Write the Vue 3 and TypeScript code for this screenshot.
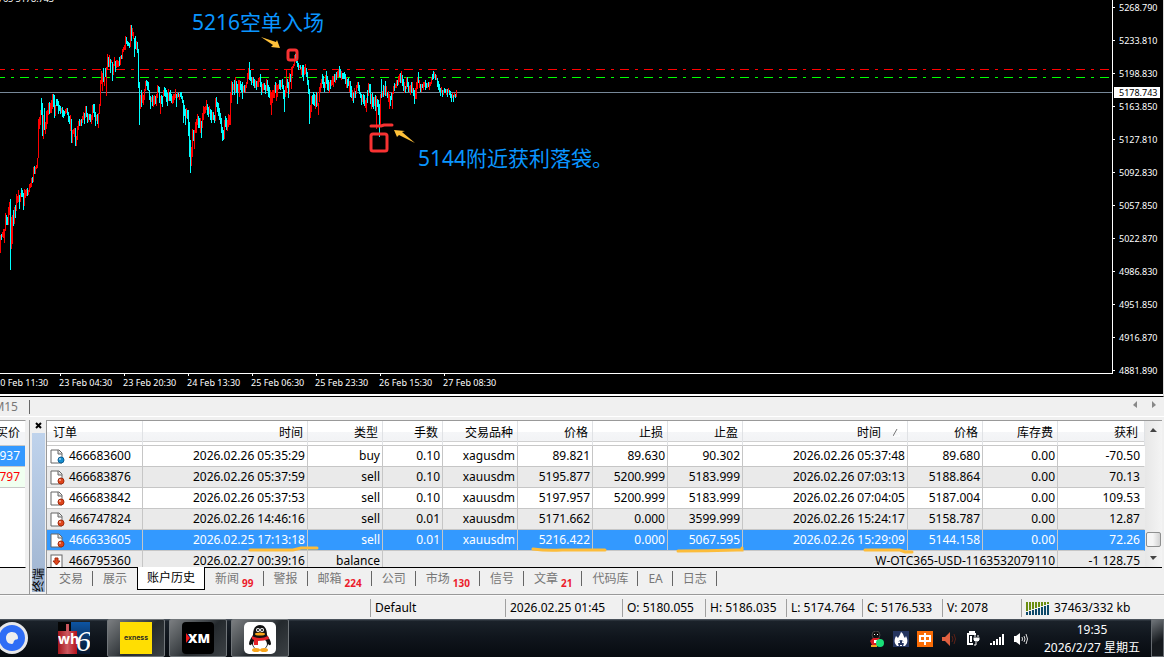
<script setup lang="ts">
interface Candle { x: number; top: number; height: number; up: boolean }
interface Order {
  id: string; kind: 'buy' | 'sell' | 'balance'; opened: string; type: string; cells: string[]; closed: string; exit: string; swap: string; profit: string
}

// One entry per bar: r = rising, c = falling, followed by the pixel span high-low.
const series = `r235-253 c234-240 r232-237 r229-238 r229-243 r213-231 c215-225 c217-225 r207-225 r202-215
c199-270 r217-249 r215-244 c210-226 r207-224 c205-218 r194-211 r196-203 r190-202 c195-209
r193-202 c188-197 c190-197 c193-210 r189-206 r190-198 r189-196 c188-196 r190-195 r184-192
r183-188 r178-187 c177-183 r167-182 c166-174 r167-174 r165-169 r158-168 r119-158 r117-129
r110-125 c98-115 c103-136 r115-139 c108-130 r122-134 r111-129 r110-124 r103-115 c102-114
r103-113 r100-113 r94-109 c94-107 c95-118 r105-116 c99-106 c99-106 c101-114 c105-111
c106-114 r108-113 c107-117 c110-118 c111-116 r109-114 r108-113 c108-115 c112-122 c116-124
r115-131 c119-143 r130-143 r129-134 r128-137 c128-146 r136-146 r126-140 r121-130 c119-126
r120-126 c119-126 r116-123 r112-120 c113-124 r106-118 c106-117 c113-123 r114-122 c114-120
c114-122 r115-124 r105-120 c104-113 c104-117 c112-126 r115-121 c114-124 r113-128 r104-114
r80-106 r71-84 r73-91 c68-82 r77-86 c68-77 r67-96 r54-70 c57-67 r55-67
c59-73 r60-63 c62-81 r64-75 r57-66 c61-72 r60-68 r60-67 r61-67 c57-66
r56-65 c55-59 r49-59 r47-52 r45-50 r36-50 c37-44 c41-46 c42-46 c43-48
r25-47 c25-41 r28-36 r32-39 c38-57 c36-49 r41-50 c42-53 c49-88 c82-125
r95-109 c90-107 r92-103 r95-105 r89-100 r81-91 c80-86 c81-90 c82-91 c90-100
c96-109 r97-102 c95-106 r96-107 r95-105 c96-104 r94-106 r85-98 c86-92 c87-103
r96-114 c95-104 c96-107 r90-97 c87-96 c88-97 c90-102 c93-106 r89-101 c92-101
c90-101 c94-103 r96-104 r94-103 r94-100 r89-98 c94-107 r93-98 c93-97 r94-100
c92-97 c92-99 c96-103 c100-123 c105-116 c109-125 r108-118 c110-119 c110-136 c122-157
c140-173 r147-166 r129-157 c130-141 r130-149 r122-133 r119-133 r114-125 c116-128 c118-128
r118-133 c121-138 r113-128 r106-120 r107-114 r106-113 r100-110 c104-115 c107-117 r106-114
c109-120 c110-123 r112-120 c112-120 c115-123 r98-121 c97-107 c102-112 c103-116 c108-120
c113-124 c118-133 c127-141 c130-140 r120-139 c116-127 c118-130 r120-131 r114-127 r115-125
r93-125 r81-103 c82-95 r84-90 c80-95 r77-92 c81-93 c84-104 r80-92 r80-97
c81-90 c84-92 c82-99 r86-93 c85-92 r85-92 r82-88 r73-84 r68-79 c62-80
c70-81 c77-85 r77-83 c77-86 c79-88 r80-88 c81-90 r81-87 r78-87 r77-82
c74-87 c82-95 r84-92 r83-90 c83-90 c85-94 r79-91 c80-91 c85-97 c87-98
r90-105 r92-115 r90-103 r90-98 r85-98 c82-93 r83-101 r85-97 r84-90 c80-89
c80-90 r80-87 c79-89 c85-99 c90-112 r86-97 r70-93 c79-88 c82-98 r73-94
c74-82 r67-89 r66-76 r64-68 r55-66 c54-61 c58-63 c61-67 c63-70 r65-68
c65-69 r67-75 c65-77 c65-81 r67-75 r64-74 c68-77 c72-85 c80-94 c89-124
r105-118 r96-112 c95-104 c92-105 c94-106 r95-109 c92-107 r92-106 r103-115 r87-102
r83-92 r79-88 c74-84 c76-88 c82-92 r75-88 c71-84 c76-90 c80-91 r82-93
c80-89 r80-86 r76-85 r76-87 c74-82 r74-83 c72-80 r71-78 r69-77 c66-77
c69-78 r71-80 c73-79 c73-79 c72-79 c74-84 r77-88 c79-88 c78-86 r81-92
c81-97 c86-98 r90-101 c93-103 r88-98 c91-98 r85-94 r82-88 c82-91 c85-94
c92-98 c94-105 r95-102 c94-104 c95-106 r100-108 r98-112 c90-103 r83-96 c84-93
c84-104 r94-109 c93-107 c97-109 r97-106 c95-111 r96-129 c99-107 c100-115 c104-137
r94-125 c79-98 r91-97 c85-97 r86-95 c81-96 r86-96 c92-98 r91-102 r94-109
c96-106 c93-100 r92-109 r86-94 c83-91 r84-88 r80-88 c80-86 r76-85 r74-82
c73-83 r71-83 c75-86 c79-91 r82-93 c86-93 r77-89 c77-87 c82-92 r86-92
r85-95 c82-93 r82-92 c88-96 c90-104 r88-99 r82-99 r77-89 c72-83 r80-88
c84-92 r84-92 c84-88 r82-90 r82-87 c80-90 c83-88 r83-88 c82-87 r82-90
r82-86 r77-84 c74-80 c71-79 r72-78 c74-80 r75-80 c78-87 c81-90 c84-92
c88-96 r87-93 c90-97 r90-95 c88-93 c89-93 r89-95 c89-97 r88-93 c90-95
c91-98 c94-102 r93-98 c95-102 r93-97 c94-98 r90-97`

const candles: Candle[] = series.split(/\s+/).map((bar, x) => {
  const [high, low] = bar.slice(1).split('-').map(Number)
  return { x, top: high, height: low - high, up: bar[0] === 'r' }
})

const prices = ['5268.790', '5233.810', '5198.830', '5163.850', '5127.810', '5092.830', '5057.850', '5022.870', '4986.830', '4951.850', '4916.870', '4881.890']
const dates = ['20 Feb 11:30', '23 Feb 04:30', '23 Feb 20:30', '24 Feb 13:30', '25 Feb 06:30', '25 Feb 23:30', '26 Feb 15:30', '27 Feb 08:30']
const headers = ['订单', '时间', '类型', '手数', '交易品种', '价格', '止损', '止盈', '时间', '价格', '库存费', '获利']

const orders: Order[] = [
  { id: '466683600', kind: 'buy', opened: '2026.02.26 05:35:29', type: 'buy', cells: ['0.10', 'xagusdm', '89.821', '89.630', '90.302'], closed: '2026.02.26 05:37:48', exit: '89.680', swap: '0.00', profit: '-70.50' },
  { id: '466683876', kind: 'sell', opened: '2026.02.26 05:37:59', type: 'sell', cells: ['0.10', 'xauusdm', '5195.877', '5200.999', '5183.999'], closed: '2026.02.26 07:03:13', exit: '5188.864', swap: '0.00', profit: '70.13' },
  { id: '466683842', kind: 'sell', opened: '2026.02.26 05:37:53', type: 'sell', cells: ['0.10', 'xauusdm', '5197.957', '5200.999', '5183.999'], closed: '2026.02.26 07:04:05', exit: '5187.004', swap: '0.00', profit: '109.53' },
  { id: '466747824', kind: 'sell', opened: '2026.02.26 14:46:16', type: 'sell', cells: ['0.01', 'xauusdm', '5171.662', '0.000', '3599.999'], closed: '2026.02.26 15:24:17', exit: '5158.787', swap: '0.00', profit: '12.87' },
  { id: '466633605', kind: 'sell', opened: '2026.02.25 17:13:18', type: 'sell', cells: ['0.01', 'xauusdm', '5216.422', '0.000', '5067.595'], closed: '2026.02.26 15:29:09', exit: '5144.158', swap: '0.00', profit: '72.26' },
]
const selected = '466633605'

const tabs = [
  { name: '交易' }, { name: '展示' }, { name: '账户历史', active: true }, { name: '新闻', count: 99 }, { name: '警报' },
  { name: '邮箱', count: 224 }, { name: '公司' }, { name: '市场', count: 130 }, { name: '信号' }, { name: '文章', count: 21 },
  { name: '代码库' }, { name: 'EA' }, { name: '日志' },
]
const traffic = Array.from({ length: 8 }, (_, i) => ({ x: i * 3, split: 10 - i }))
</script>

<template>
  <div class="desktop">
    <main class="chart">
      <div class="plot">
        <svg class="canvas" width="1112" height="373">
          <text class="ohlc" x="54" y="2" text-anchor="end">5169.765 5178.743</text>
          <g shape-rendering="crispEdges">
            <path class="stop" d="M-4 69.5H4000" />
            <path class="ask" d="M-4 77.5H4000" />
            <path class="bid" d="M0 92.5H4000" />
            <rect v-for="c in candles" :key="c.x" :x="c.x" :y="c.top" width="1" :height="c.height" :class="c.up ? 'up' : 'down'" />
          </g>
          <g class="mark">
            <rect x="288" y="50" width="9" height="10" rx="2" />
            <rect x="371" y="134" width="16" height="17" rx="2" />
            <path d="M371 126H381L384 125H392" />
          </g>
          <g class="arrow">
            <path d="M261 37L276 42L277 40L280 48L271 47L273 45Z" />
            <path d="M415 143L402 132L405 131L394 130L397 137L399 135Z" />
          </g>
          <text class="note" x="192" y="30">5216空单入场</text>
          <text class="note" x="418" y="166">5144附近获利落袋。</text>
        </svg>
      </div>
      <div class="price-axis">
        <ul><li v-for="p in prices" :key="p">{{ p }}</li></ul>
        <span class="current">5178.743</span>
      </div>
      <ul class="date-axis"><li v-for="d in dates" :key="d">{{ d }}</li></ul>
    </main>

    <nav class="chart-tabs">
      <span class="period">M15</span>
      <span class="nudge">
        <button type="button" aria-label="Previous"><svg width="5" height="8"><path d="M4 0V7L0 4Z" /></svg></button>
        <button type="button" aria-label="Next"><svg width="5" height="8"><path d="M0 0V7L4 4Z" /></svg></button>
      </span>
    </nav>

    <section class="workspace">
      <aside class="quotes">
        <div class="quote-box">
          <div class="quote head"><span>买价</span></div>
          <div class="quote picked"><span>937</span></div>
          <div class="quote falling"><span>797</span></div>
        </div>
      </aside>
      <div class="grip">
        <button type="button" aria-label="Close"><svg width="7" height="7"><path d="M1 1L6 6M6 1L1 6" /></svg></button>
        <div class="title"><span>终端</span></div>
      </div>
      <div class="terminal">
        <div class="list">
          <div class="rows">
            <table>
              <colgroup>
                <col class="w-id"><col class="w-time"><col class="w-mid"><col class="w-lot"><col class="w-mid"><col class="w-mid"><col class="w-mid"><col class="w-mid"><col class="w-time"><col class="w-mid"><col class="w-mid"><col>
              </colgroup>
              <thead>
                <tr>
                  <th v-for="(h, i) in headers" :key="i" scope="col" :class="{ sorted: i === 8 }">
                    {{ h }}<svg v-if="i === 8" width="8" height="8"><path class="lit" d="M3 1L7 7H0" /><path d="M0 7L4 0" /></svg>
                  </th>
                </tr>
              </thead>
              <tbody>
                <tr v-for="o in orders" :key="o.id" :class="{ selected: o.id === selected }">
                  <td>
                    <svg class="doc" width="15" height="15" viewBox="0 0 15 15">
                      <path d="M1 1H9L12 4V14H1Z" fill="#fff" stroke="#666" /><path d="M8 1V5H12" fill="#ddd" stroke="#666" />
                      <circle cx="11" cy="11" r="3" :fill="o.kind === 'buy' ? '#168fd0' : '#e0451b'" :stroke="o.kind === 'buy' ? '#0b5f96' : '#a42a0c'" />
                      <circle cx="10" cy="10" r="1" fill="#fff" opacity=".6" />
                    </svg>{{ o.id }}
                  </td>
                  <td>{{ o.opened }}</td><td>{{ o.type }}</td>
                  <td v-for="(v, i) in o.cells" :key="i">{{ v }}</td>
                  <td>{{ o.closed }}</td><td>{{ o.exit }}</td><td>{{ o.swap }}</td><td class="profit">{{ o.profit }}</td>
                </tr>
                <tr>
                  <td>
                    <svg class="doc" width="15" height="15" viewBox="0 0 15 15">
                      <rect x="1" y="1" width="11" height="13" fill="#fff" stroke="#666" />
                      <path d="M5 4H8V7H10L6.500 11L3 7H5Z" fill="#e0451b" stroke="#a42a0c" />
                    </svg>466795360
                  </td>
                  <td>2026.02.27 00:39:16</td><td>balance</td>
                  <td colspan="8">W-OTC365-USD-1163532079110</td><td class="profit">-1 128.75</td>
                </tr>
              </tbody>
            </table>
            <svg class="underlines" width="1098" height="146">
              <path d="M203 129H246L254 127H270M486 128Q500 130 515 129H558M631 130Q660 130 690 129H695V127M818 129H853L858 131H865" />
            </svg>
          </div>
          <div class="scroll">
            <svg width="7" height="5"><path d="M0 4L3 0L7 4Z" /></svg>
            <span class="thumb"></span>
            <svg width="7" height="5"><path d="M0 0L3 4L7 0Z" /></svg>
          </div>
        </div>
        <nav class="tabs">
          <button v-for="t in tabs" :key="t.name" type="button" :class="{ active: t.active }">
            {{ t.name }}<b v-if="t.count">{{ t.count }}</b>
          </button>
        </nav>
      </div>
    </section>

    <footer class="status">
      <span class="fill"></span>
      <span class="s-profile">Default</span>
      <span class="s-time">2026.02.25 01:45</span>
      <span class="s-o">O: 5180.055</span>
      <span class="s-h">H: 5186.035</span>
      <span class="s-l">L: 5174.764</span>
      <span class="s-c">C: 5176.533</span>
      <span class="s-v">V: 2078</span>
      <span class="s-net">
        <svg width="24" height="13" shape-rendering="crispEdges">
          <template v-for="t in traffic" :key="t.x">
            <rect :x="t.x" y="0" width="2" :height="t.split - 1" fill="#6b8e12" />
            <rect :x="t.x" :y="t.split" width="2" :height="13 - t.split" fill="#0d4a6b" />
          </template>
        </svg>37463/332 kb
      </span>
    </footer>

    <div class="taskbar">
      <button type="button" class="app round" aria-label="Browser">
        <svg width="32" height="32" viewBox="0 0 32 32">
          <circle cx="16" cy="16" r="16" fill="#e8e8ea" /><circle cx="16" cy="16" r="13" fill="#2f6df6" />
          <path d="M16 22C12 22 10 19 10 16C10 12 13 10 16 10C20 10 22 13 22 16C22 18 20 17 19 18C17 19 18 22 16 22Z" fill="#eee" />
        </svg>
      </button>
      <button type="button" class="app plain" aria-label="wh6">
        <svg width="32" height="32" viewBox="0 0 32 32">
          <defs><linearGradient id="wr" x2="1"><stop offset="0" stop-color="#a3161c" /><stop offset=".5" stop-color="#cc5960" /><stop offset="1" stop-color="#b5111a" /></linearGradient>
            <linearGradient id="wb" y2="1" x2="0"><stop offset="0" stop-color="#0d55a4" /><stop offset="1" stop-color="#07152b" /></linearGradient></defs>
          <rect width="32" height="32" fill="#050505" /><rect x="13" width="19" height="32" fill="url(#wb)" />
          <path d="M0 9H8V2H11V9H19V32H0Z" fill="url(#wr)" />
          <text x="0" y="22" class="wh">wh</text><text x="18" y="29" class="six">6</text>
        </svg>
      </button>
      <button type="button" class="app" aria-label="Exness">
        <svg width="32" height="32" viewBox="0 0 32 32"><rect width="32" height="32" fill="#ffde02" /><text x="16" y="18" text-anchor="middle" class="exness">exness</text></svg>
      </button>
      <button type="button" class="app" aria-label="XM">
        <svg width="32" height="32" viewBox="0 0 32 32"><rect width="32" height="32" rx="4" fill="#000" /><path d="M4 11L8 16L4 21Z" fill="#f01818" /><text x="6" y="21" class="xm">XM</text></svg>
      </button>
      <button type="button" class="app" aria-label="QQ">
        <svg width="32" height="32" viewBox="0 0 32 32">
          <rect width="32" height="32" rx="5" fill="#fff" />
          <path d="M9 13C9 6 12 3 16 3C20 3 23 6 23 13C25 16 27 19 27 22C26 24 25 23 24 22C23 26 20 28 16 28C12 28 9 26 8 22C7 23 6 24 5 22C5 19 7 16 9 13Z" fill="#111" />
          <ellipse cx="16" cy="22" rx="7" ry="6" fill="#fff" />
          <ellipse cx="12" cy="28" rx="4" ry="2" fill="#f9a51a" /><ellipse cx="20" cy="28" rx="4" ry="2" fill="#f9a51a" />
          <ellipse cx="14" cy="8" rx="2" ry="2" fill="#fff" /><ellipse cx="18" cy="8" rx="2" ry="2" fill="#fff" />
          <circle cx="14" cy="8" r="1" /><circle cx="18" cy="8" r="1" />
          <ellipse cx="16" cy="12" rx="5" ry="1.500" fill="#f9a51a" />
          <path d="M8 14Q16 18 24 14L25 17Q20 19 14 19V23H10V18L8 17Z" fill="#e52329" />
        </svg>
      </button>
      <span class="spacer"></span>
      <span class="tray">
        <svg width="16" height="16" viewBox="0 0 16 16">
          <ellipse cx="7" cy="4" rx="4" ry="4" fill="#111" stroke="#444" /><path d="M5 3H6V4H5ZM8 3H9V4H8Z" fill="#fff" /><path d="M1 10L4 7H10L13 11L10 14H3Z" fill="#d91e24" />
          <path d="M5 9H9V12H5Z" fill="#fff" /><path d="M2 14H8V16H2Z" fill="#f3a61d" /><circle cx="11" cy="12" r="4" fill="#19e078" />
        </svg>
        <svg width="16" height="16" viewBox="0 0 16 16">
          <rect width="16" height="16" fill="#25355f" /><path d="M8 1C11 3 10 5 12 7L13 5C15 9 15 12 12 15H10C12 12 10 9 8 9C6 9 4 12 6 15H4C1 12 1 9 3 5L5 7C6 5 7 4 8 1Z" fill="#fff" /><path d="M5 11L7 10V12H5ZM9 10L11 11V12H9ZM7 14H9V15H7Z" fill="#fff" />
        </svg>
        <svg width="16" height="16" viewBox="0 0 16 16"><rect width="16" height="16" fill="#fa6c05" /><path d="M3 5H13V10H3ZM8 2V14" fill="none" stroke="#fff" stroke-width="2" /></svg>
        <svg width="16" height="16" viewBox="0 0 16 16"><path d="M1 6H4L9 1V15L4 10H1Z" fill="#df6040" /><path d="M11 5Q13 8 11 11M13 3Q16 8 13 13" fill="none" stroke="#5c2116" /></svg>
        <svg width="16" height="16" viewBox="0 0 16 16" fill="none" stroke="#fff">
          <path d="M8 13H3V3H11M5 3V1H9V3" stroke-width="2" /><path d="M5 5H7V11H5Z" fill="#fff" stroke="none" />
          <path d="M8 6H15V9L13 11H10L8 9Z" fill="#fff" stroke="#10161d" /><path d="M10 6V4M13 6V4M11 11V14H9" />
        </svg>
        <svg width="16" height="16" viewBox="0 0 16 16" fill="#fff"><path d="M1 12H3V14H1ZM4 10H6V14H4ZM7 8H9V14H7ZM10 6H12V14H10ZM13 3H15V14H13Z" /></svg>
        <svg width="16" height="16" viewBox="0 0 16 16"><path d="M1 5H3L7 2V14L3 11H1Z" fill="#fff" /><path d="M9 6Q10 8 9 10M11 5Q13 8 11 11M13 3Q16 8 13 13" fill="none" stroke="#ddd" /></svg>
      </span>
      <time class="clock">19:35<br>2026/2/27 星期五</time>
      <button type="button" class="peek" aria-label="Show desktop"></button>
    </div>
  </div>
</template>

<style>
body { margin: 0; background: #f0f0f0; }
</style>

<style scoped>
.desktop {
  display: flex; flex-direction: column; min-height: 100vh; overflow: hidden;
  background: #f0f0f0; color: #000;
  font: 12px/20px "Noto Sans", "Noto Sans CJK SC", sans-serif;
}
* { box-sizing: border-box; }
ul { list-style: none; margin: 0; padding: 0; }
button { font: inherit; border: 0; padding: 0; background: none; color: inherit; }
svg { display: block; flex: none; }

.chart {
  flex: 1 0 397px; display: grid; grid-template: 374px 1fr / 1fr 50px;
  background: #000; color: #fff; font-size: 9px; overflow: hidden;
  border-bottom: 1px solid #000; box-shadow: inset 0 -2px #fff; border-right: 1px solid #ddd;
}
.plot { overflow: hidden; border-right: 1px solid #fff; border-bottom: 1px solid #fff; min-width: 0; }
.canvas { width: 100%; }
.stop, .ask { stroke-dasharray: 9 6 3 6; }
.stop { stroke: #f00; }
.ask { stroke: #0f0; }
.bid { stroke: #778899; }
.up { fill: #f00; }
.down { fill: #0ff; }
.ohlc { fill: #fff; font-size: 9px; }
.mark { fill: none; stroke: #f83232; stroke-width: 3; stroke-linecap: round; }
.arrow { fill: #ffc139; }
.note { fill: #0a96ff; font-size: 21px; }
.price-axis { position: relative; }
.price-axis ul { margin-top: -9px; }
.price-axis li { display: flex; align-items: center; gap: 4px; height: 33px; }
.price-axis li::before { content: ""; width: 2px; height: 1px; background: #fff; }
.current { position: absolute; left: 1px; top: 87px; width: 46px; padding-left: 5px; background: #fff; color: #000; line-height: 11px; }
.date-axis { grid-column: 1 / 3; display: flex; margin-left: -5px; height: 22px; }
.date-axis li { flex: none; width: 64px; line-height: 18px; white-space: nowrap; position: relative; }
.date-axis li::before { content: ""; position: absolute; left: 1px; top: 0; width: 1px; height: 2px; background: #fff; }

.chart-tabs { display: flex; justify-content: space-between; height: 20px; border-bottom: 1px solid #fff; color: #777; }
.period { width: 30px; height: 14px; margin-top: 3px; line-height: 14px; direction: rtl; padding-right: 11px; border-right: 1px solid #666; }
.nudge { display: flex; gap: 14px; align-items: center; padding: 0 7px 3px 0; }
.nudge svg { fill: #888; }

.workspace { display: flex; height: 178px; padding-top: 3px; border-bottom: 1px solid #999; }
.quotes { width: 30px; flex: none; border-right: 1px solid #999; }
.quote-box { width: 26px; height: 148px; background: #fff; border-top: 1px solid #999; border-bottom: 1px solid #000; border-right: 1px solid #f0f0f0; overflow: hidden; }
.quote { display: flex; justify-content: flex-end; height: 21px; padding-right: 5px; border-bottom: 1px solid #c8c8c8; white-space: nowrap; }
.quote.head { height: 25px; line-height: 24px; background: linear-gradient(#fff 45%, #f3f4f6 46%); }
.picked { background: #3399ff; color: #fff; }
.falling { background: #f0fff0; color: #f00; }
.grip { width: 16px; flex: none; padding-left: 2px; display: flex; flex-direction: column; border-right: 1px solid #f0f0f0; }
.grip button { height: 13px; display: grid; place-items: center; padding: 0 1px 3px 0; }
.grip button path { stroke: #000; stroke-width: 2; }
.title { flex: 1; display: flex; align-items: flex-end; justify-content: center; background: linear-gradient(#bfd3ec, #9fb4d0); margin-bottom: 2px; }
.title span { writing-mode: vertical-rl; text-orientation: sideways; transform: rotate(180deg); line-height: 13px; }

.terminal { flex: 1; min-width: 0; border-left: 1px solid #999; border-top: 1px solid #999; margin-right: 2px; }
.list { display: flex; height: 147px; border-bottom: 1px solid #000; overflow: hidden; }
.rows { position: relative; flex: 1; min-width: 0; }
table { width: 100%; table-layout: fixed; border-collapse: separate; border-spacing: 0; background: #fff; }
.w-id { width: 96px; }
.w-time { width: 165px; }
.w-mid { width: 75px; }
.w-lot { width: 60px; }
th { height: 25px; padding: 0 4px 0 6px; font-weight: 400; text-align: right; line-height: 20px; background: linear-gradient(#fff 45%, #f5f6f8 46%, #f2f3f5 84%, #d0d0d0 85%, #d0d0d0 88%, #fff 89%); border-right: 1px solid #e0e2e5; border-bottom: 1px solid #c8c8c8; white-space: nowrap; }
th:first-child { text-align: left; }
th:last-child { padding-right: 6px; }
th svg { display: inline-block; margin: 0 2px 0 12px; fill: none; stroke: #777; }
th .lit { stroke: #fff; }
td { height: 21px; padding: 0 2px 0 3px; line-height: 18px; text-align: right; white-space: nowrap; border-right: 1px solid #c6c6c6; border-bottom: 1px solid #c6c6c6; }
td:first-child { display: flex; align-items: center; gap: 4px; }
td.profit { padding-right: 4px; border-right-color: transparent; }
tbody tr:nth-child(even) { background: #eaeaea; }
tbody tr.selected { background: #3399ff; color: #fff; }
tbody tr:last-child { background: #eaeaea; }
.underlines { position: absolute; left: 0; top: 0; fill: none; stroke: #fcbc3a; stroke-width: 3; stroke-linecap: round; }
.scroll { width: 17px; flex: none; display: flex; flex-direction: column; align-items: center; padding: 7px 0 6px; background: linear-gradient(90deg, #e7e7e7, #f4f4f4); }
.scroll svg { fill: #444; }
.thumb { width: 15px; height: 15px; margin: auto 0 9px; border: 1px solid #8e8f8f; border-radius: 2px; background: linear-gradient(90deg, #f5f5f5 45%, #d2d2d2); }
.tabs { display: flex; padding-left: 2px; color: #777; }
.tabs button { position: relative; flex: none; padding: 0 10px; height: 22px; line-height: 20px; white-space: nowrap; }
.tabs button::after { content: ""; position: absolute; right: 0; top: 3px; width: 1px; height: 15px; background: #666; }
.tabs .active { margin-top: -1px; padding: 0 9px; height: 23px; background: #fff; color: #000; border: 1px solid #000; border-top: 0; }
.tabs .active::after, .tabs button:nth-child(2)::after { content: none; }
.tabs b { display: inline-block; font-size: 10px; line-height: 12px; color: #ec1c2c; margin-left: 3px; vertical-align: -4px; }

.status { display: flex; height: 24px; padding: 3px 0 2px; border-top: 1px solid #fafafa; }
.status span { flex: none; padding-left: 4px; line-height: 18px; border-left: 1px solid #a0a0a0; white-space: nowrap; }
.status .fill { flex: 1; border: 0; }
.s-profile { width: 135px; }
.s-time { width: 117px; }
.s-o { width: 83px; }
.s-h { width: 81px; }
.s-l { width: 76px; }
.s-c { width: 80px; }
.s-v { width: 79px; }
.status .s-net { width: 143px; display: flex; align-items: center; gap: 4px; }

.taskbar { display: flex; align-items: stretch; height: 38px; gap: 4px; color: #fff; background: linear-gradient(#5a626b 0, #1b222a 2px, #10161d 45%, #070b10); overflow: hidden; }
.app { width: 58px; display: grid; place-items: center; border: 1px solid #71767a; border-radius: 2px; background: linear-gradient(135deg, #7b7e81, #3a3f43 45%, #24292d 55%, #3c4145); }
.app.round, .app.plain { border: 0; background: none; }
.app.round { width: 28px; justify-content: end; }
.app.plain { width: 71px; padding-left: 13px; }
.wh { font: 700 14px "Open Sans", sans-serif; fill: #fff; }
.six { font: italic 30px "Liberation Serif", serif; fill: #fff; }
.exness { font: 600 7px Inter, sans-serif; fill: #222; }
.xm { font: 800 13px "Open Sans", sans-serif; fill: #fff; }
.spacer { flex: 1; }
.tray { display: flex; gap: 8px; align-items: center; padding-top: 2px; }
.clock { width: 114px; padding: 2px 0 0 4px; text-align: center; line-height: 18px; white-space: nowrap; }
.peek { width: 13px; border: 1px solid #666b70; background: linear-gradient(150deg, #70757a, #15191d 60%); }
</style>
